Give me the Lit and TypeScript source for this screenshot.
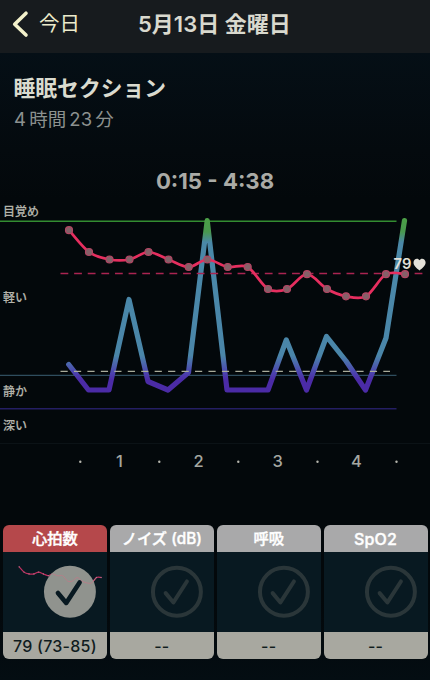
import { LitElement, html, svg, css, nothing } from "lit";
import { customElement, property } from "lit/decorators.js";
import { classMap } from "lit/directives/class-map.js";

type Point = [number, number];

const HEART: Point[] = [
  [69, 230.2], [89, 252], [109.5, 259.5], [129.5, 259.5], [148.5, 252], [168.5, 259.5],
  [188.7, 267], [207.3, 259.5], [227.7, 267], [247.7, 267], [268, 289], [287, 289],
  [307, 274.2], [327, 289], [346, 296.3], [366, 296.3], [386, 274.2], [405, 274.2],
];

const SLEEP: Point[] = [
  [68.7, 364.5], [88.5, 390], [109, 390], [129, 299.5], [148, 381.5], [168, 390], [188.5, 372.5],
  [207.2, 220.5], [227, 390], [268, 390], [286.3, 340], [306.5, 390], [326.5, 336.5],
  [346, 361], [365.5, 390], [386, 338], [404.5, 220.5],
];

const smooth = (pts: Point[]): string =>
  pts.reduce((d, p, i) => {
    if (i === 0) return `M${p[0]} ${p[1]}`;
    const a = pts[Math.max(0, i - 2)];
    const b = pts[i - 1];
    const c = pts[Math.min(pts.length - 1, i + 1)];
    const t = 0.16;
    return `${d}C${b[0] + (p[0] - a[0]) * t} ${b[1] + (p[1] - a[1]) * t} ${p[0] - (c[0] - b[0]) * t} ${p[1] - (c[1] - b[1]) * t} ${p[0]} ${p[1]}`;
  }, "");

const straight = (pts: Point[]): string => pts.map((p) => p.join(",")).join(" ");

const LEVELS: [string, number][] = [["目覚め", 215.5], ["軽い", 301.5], ["静か", 396], ["深い", 430]];
const HOURS: [string, number][] = [["1", 119.5], ["2", 198.5], ["3", 277.7], ["4", 356.5]];
const HALVES = [80.3, 159.3, 238.3, 317.5, 396.5];

@customElement("sleep-chart")
class SleepChart extends LitElement {
  static styles = css`
    :host { display: block; }
    svg { display: block; width: 430px; height: 285px; }
    text { font-family: Inter, "Noto Sans CJK JP", sans-serif; }
    .level { font-size: 12px; font-weight: 500; fill: #b4b4ac; stroke: #b4b4ac; stroke-width: 0.15px; }
    .hour { font-size: 16.5px; font-weight: 500; fill: #a5a7a1; text-anchor: middle; }
    .now { font-size: 14.8px; font-weight: 600; fill: #e3e0d8; }
  `;

  render() {
    return html`
      <svg viewBox="0 195 430 285" fill="none">
        <defs>
          <linearGradient id="depth" gradientUnits="userSpaceOnUse" x1="0" y1="218" x2="0" y2="392">
            <stop offset="0" stop-color="#4ba046" />
            <stop offset="0.08" stop-color="#49984f" />
            <stop offset="0.14" stop-color="#4a88a8" />
            <stop offset="0.79" stop-color="#4a86a9" />
            <stop offset="0.88" stop-color="#4c49b0" />
            <stop offset="0.93" stop-color="#4b2ba6" />
            <stop offset="1" stop-color="#4b2ba6" />
          </linearGradient>
        </defs>
        <path d="M0 221.200H396.500" stroke="#338c31" stroke-width="1.4" />
        <path d="M0 375.400H396.500" stroke="#2f4d5e" stroke-width="1.200" />
        <path d="M0 408.800H396.500" stroke="#241e63" stroke-width="1.500" />
        <path d="M0 443.500H430" stroke="#0b1216" stroke-width="1" />
        <polyline points=${straight(SLEEP)} stroke="url(#depth)" stroke-width="5.2" stroke-linecap="round" stroke-linejoin="round" />
        <path d="M60.500 371.400H390" stroke="#a8ab9a" stroke-width="1.300" stroke-dasharray="7.200 6.250" />
        <path d="M60.500 273.600H423" stroke="#aa2452" stroke-width="1.500" stroke-dasharray="7.800 5.820" />
        <path d=${smooth(HEART)} stroke="#e62e5f" stroke-width="2.7" />
        ${HEART.map(([x, y]) => svg`<circle cx=${x} cy=${y} r="3.5" fill="#856068" stroke="#b54664" stroke-width="1.2" />`)}
        ${LEVELS.map(([name, y]) => svg`<text class="level" x="3" y=${y}>${name}</text>`)}
        ${HOURS.map(([name, x]) => svg`<text class="hour" x=${x} y="466.500">${name}</text>`)}
        ${HALVES.map((x) => svg`<circle cx=${x} cy="461.7" r="1.2" fill="#b5b5ad" />`)}
        <text class="now" x="393.500" y="269.300">79</text>
        <path d="M419.500 270.500C416.500 268 413.500 265.800 413.500 262.500C413.500 258.400 418.200 257.500 419.500 260.300C420.900 257.500 425.600 258.400 425.600 262.500C425.600 265.800 422.500 268 419.500 270.500Z" fill="#e3e0d8" />
      </svg>
    `;
  }
}

@customElement("metric-card")
class MetricCard extends LitElement {
  @property() label = "";
  @property() value = "--";
  @property({ type: Boolean }) active = false;

  static styles = css`
    :host { display: flex; flex-direction: column; height: 134px; border-radius: 6px; overflow: hidden; font-family: Inter, "Noto Sans CJK JP", sans-serif; }
    .head, .foot { display: flex; align-items: center; justify-content: center; height: 27px; font-size: 15.5px; white-space: nowrap; }
    .head { background: #a9a9aa; color: #fff; font-weight: 500; font-size: 15.3px; -webkit-text-stroke: 0.4px #fff; line-height: 27px; align-items: flex-start; }
    .latin { font-size: 16px; letter-spacing: 0.2px; line-height: 28px; }
    .head.active { background: #b5484b; }
    .foot { background: #a8a8a0; color: #101c20; font-weight: 450; font-size: 16px; letter-spacing: 0.25px; padding-top: 1px; height: 26px; }
    .body { flex: 1; background: #081921; }
    svg { display: block; width: 100%; height: 80px; }
  `;

  render() {
    const mini = HEART.map(([x, y]): Point => [16.2 + (x - 69) * 0.244, 14.8 + (y - 230) * 0.243]);
    const latin = /^[\x20-\x7e]+$/.test(this.label);
    return html`
      <div class=${classMap({ head: true, active: this.active, latin })}>${this.label}</div>
      <div class="body">
        <svg viewBox="0 0 104 80" preserveAspectRatio="xMinYMin meet" fill="none" stroke-linecap="round" stroke-linejoin="round">
          ${this.active
            ? svg`
              <path d=${smooth(mini)} stroke="#c42e60" stroke-width="1.2" />
              ${mini.map(([x, y]) => svg`<circle cx=${x} cy=${y} r="0.7" fill="#b57088" />`)}
              <circle cx="67" cy="39.8" r="26" fill="#90938e" />
              <path d=${smooth(mini.slice(7, 17))} stroke="#b87d88" stroke-width="0.9" />
              <path d="M55 41L63.300 51L76.700 30.500" stroke="#081921" stroke-width="4.600" />`
            : svg`
              <circle cx="67" cy="39.8" r="24" stroke="#2a3639" stroke-width="4" />
              <path d="M55.700 41.200L63.500 50.500L77 29.500" stroke="#2a3639" stroke-width="4" />`}
        </svg>
      </div>
      <div class="foot">${this.value || nothing}</div>
    `;
  }
}

@customElement("app-root")
class AppRoot extends LitElement {
  static styles = css`
    :host {
      display: flex; flex-direction: column; box-sizing: border-box; width: 430px; height: 680px; overflow: hidden;
      background: linear-gradient(#050f16 52px, #040a0e 150px, #03080b 200px, #03080b 600px, #040d12 680px);
      font-family: Inter, "Noto Sans CJK JP", sans-serif;
    }
    .bar { display: grid; grid-template-columns: 138px 1fr; align-items: center; height: 52.5px; padding-bottom: 5px; box-sizing: border-box; background: #171b1e; }
    .back { display: flex; align-items: center; gap: 10px; padding-left: 12px; font-size: 20.5px; color: #ecebcb; line-height: 30px; }
    .chevron { display: block; width: 17px; height: 28px; }
    .date { font-size: 22px; font-weight: 600; color: #d9d9ce; white-space: nowrap; line-height: 30px; }
    .intro { padding: 20px 14px 0; height: 115.5px; box-sizing: border-box; }
    .title { font-size: 21.8px; line-height: 30px; font-weight: 700; color: #dadbcf; margin-left: -0.5px; }
    .length { font-size: 18.5px; line-height: 28px; margin-top: 2.5px; color: #8c918f; display: flex; gap: 3.2px; }
    .range { height: 27px; line-height: 26px; text-align: center; font-size: 22.2px; font-weight: 700; color: #aaaba6; }
    .cards { display: grid; grid-template-columns: repeat(4, 1fr); gap: 3px; margin-top: 45px; padding: 0 2.5px 0 3px; }
  `;

  render() {
    return html`
      <header class="bar">
        <div class="back">
          <svg class="chevron" viewBox="0 0 17 28" fill="none" stroke="#f3f1cb" stroke-width="3.6" stroke-linecap="round" stroke-linejoin="round">
            <path d="M14 3.200L2.700 14.200L14 25" />
          </svg>
          <span>今日</span>
        </div>
        <div class="date">5月13日 金曜日</div>
      </header>
      <section class="intro">
        <div class="title">睡眠セクション</div>
        <div class="length"><span>4</span><span>時間</span><span>23</span><span>分</span></div>
      </section>
      <div class="range">0:15 - 4:38</div>
      <sleep-chart></sleep-chart>
      <div class="cards">
        <metric-card label="心拍数" value="79 (73-85)" active></metric-card>
        <metric-card label="ノイズ (dB)"></metric-card>
        <metric-card label="呼吸"></metric-card>
        <metric-card label="SpO2"></metric-card>
      </div>
    `;
  }
}
